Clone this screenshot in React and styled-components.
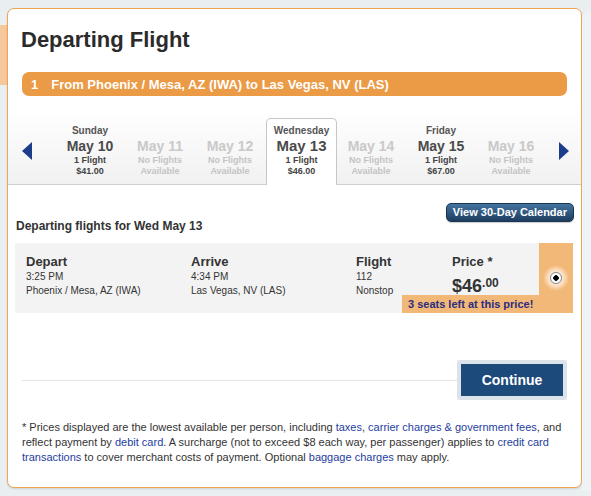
import React from "react";
import styled, { createGlobalStyle } from "styled-components";

const GlobalStyle = createGlobalStyle`
  html, body {
    margin: 0;
    padding: 0;
    background: #e9eef0;
  }
  body {
    font-family: "Liberation Sans", Arial, sans-serif;
  }
`;

const days = [
  { day: "Sunday", date: "May 10", flights: "1 Flight", price: "$41.00" },
  { date: "May 11" },
  { date: "May 12" },
  { day: "Wednesday", date: "May 13", flights: "1 Flight", price: "$46.00", selected: true },
  { date: "May 14" },
  { day: "Friday", date: "May 15", flights: "1 Flight", price: "$67.00" },
  { date: "May 16" },
];

const App = () => {
  return (
    <Page>
      <GlobalStyle />
      <LeftStub />
      <Card>
        <Title>Departing Flight</Title>
        <Banner>
          <BannerNum>1</BannerNum>
          From Phoenix / Mesa, AZ (IWA) to Las Vegas, NV (LAS)
        </Banner>

        <Strip>
          <Arrow $dir="left" />
          <DaysRow>
            {days.map((d) => {
              const open = !!d.flights;
              return (
                <DayCell key={d.date} $selected={d.selected}>
                  <DayName>{d.day}</DayName>
                  <DateText $open={open} $selected={d.selected}>
                    {d.date}
                  </DateText>
                  <Info $open={open}>{open ? d.flights : "No Flights"}</Info>
                  <Info $open={open}>{open ? d.price : "Available"}</Info>
                </DayCell>
              );
            })}
          </DaysRow>
          <Arrow $dir="right" />
        </Strip>

        <Section>
          <SectionHeader>
            <Heading>Departing flights for Wed May 13</Heading>
            <CalendarButton>View 30-Day Calendar</CalendarButton>
          </SectionHeader>

          <FlightRow>
            <Col $w="165px">
              <ColHead>Depart</ColHead>
              <Detail>3:25 PM</Detail>
              <Detail>Phoenix / Mesa, AZ (IWA)</Detail>
            </Col>
            <Col $w="165px">
              <ColHead>Arrive</ColHead>
              <Detail>4:34 PM</Detail>
              <Detail>Las Vegas, NV (LAS)</Detail>
            </Col>
            <Col $w="96px">
              <ColHead>Flight</ColHead>
              <Detail>112</Detail>
              <Detail>Nonstop</Detail>
            </Col>
            <Col $w="auto" $grow>
              <ColHead>Price *</ColHead>
              <BigPrice>
                $46<Cents>.00</Cents>
              </BigPrice>
            </Col>
            <RadioCell>
              <Glow>
                <Radio />
              </Glow>
            </RadioCell>
            <Seats>3 seats left at this price!</Seats>
          </FlightRow>
        </Section>

        <Actions>
          <Rule />
          <ContinueOuter>
            <ContinueButton>Continue</ContinueButton>
          </ContinueOuter>
        </Actions>

        <Footnote>
          * Prices displayed are the lowest available per person, including{" "}
          <Link>taxes</Link>, <Link>carrier charges &amp; government fees</Link>, and
          reflect payment by <Link>debit card</Link>. A surcharge (not to exceed $8
          each way, per passenger) applies to <Link>credit card transactions</Link> to
          cover merchant costs of payment. Optional <Link>baggage charges</Link> may
          apply.
        </Footnote>
      </Card>
      <RightPanel />
    </Page>
  );
};

export default App;

const Page = styled.div`
  display: flex;
  align-items: flex-start;
  height: 496px;
  padding-top: 8px;
  box-sizing: border-box;
  overflow: hidden;
`;

const LeftStub = styled.div`
  width: 7px;
  height: 60px;
  margin-top: 17px;
  background: #f6c89d;
`;

const RightPanel = styled.div`
  flex: 1;
  height: 480px;
  margin-top: 3px;
  background: #f0f3f5;
  border-top-left-radius: 8px;
`;

const Card = styled.div`
  width: 575px;
  height: 480px;
  box-sizing: border-box;
  border: 1px solid #f0a456;
  border-radius: 7px;
  background: #fff;
  padding-top: 18px;
  box-shadow: 0 1px 2px rgba(0, 0, 0, 0.12);
`;

const Title = styled.h1`
  margin: 0 13px;
  font-size: 22px;
  line-height: 26px;
  font-weight: bold;
  color: #2b2b2b;
`;

const Banner = styled.div`
  display: flex;
  align-items: center;
  height: 24px;
  margin: 19px 14px 0;
  padding-left: 9px;
  border-radius: 7px;
  background: #eb9a45;
  color: #fff;
  font-size: 13px;
  font-weight: bold;
`;

const BannerNum = styled.span`
  margin-right: 13px;
`;

const Strip = styled.div`
  display: flex;
  align-items: stretch;
  height: 77px;
  box-sizing: border-box;
  margin-top: 12px;
  padding: 10px 14px 0;
  border-bottom: 1px solid #cfcfcf;
  background: linear-gradient(#ffffff, #f1f1f1);
`;

const Arrow = styled.div`
  align-self: center;
  width: 0;
  height: 0;
  border-top: 9px solid transparent;
  border-bottom: 9px solid transparent;
  ${(p) =>
    p.$dir === "left"
      ? "border-right: 10px solid #1c3c8c;"
      : "border-left: 10px solid #1c3c8c;"}
`;

const DaysRow = styled.div`
  display: flex;
  margin: 0 13px 0 23px;
`;

const DayCell = styled.div`
  width: 70px;
  box-sizing: border-box;
  display: flex;
  flex-direction: column;
  align-items: center;
  padding-top: 7px;
  font-weight: bold;
  text-align: center;
  ${(p) =>
    p.$selected &&
    `
    width: 71px;
    margin: 0 -1px -1px 1px;
    padding-top: 6px;
    background: #fff;
    border: 1px solid #c6c6c6;
    border-bottom: none;
    border-radius: 5px 5px 0 0;
  `}
`;

const DayName = styled.div`
  min-height: 12px;
  font-size: 10px;
  line-height: 12px;
  color: #555;
`;

const DateText = styled.div`
  font-size: ${(p) => (p.$selected ? "15px" : "14px")};
  line-height: 18px;
  color: ${(p) => (p.$open ? "#4a4a4a" : "#c9c9c9")};
`;

const Info = styled.div`
  font-size: 9px;
  line-height: 11px;
  color: ${(p) => (p.$open ? "#444" : "#c4c4c4")};
`;

const Section = styled.div`
  padding: 0 8px 0 7px;
`;

const SectionHeader = styled.div`
  display: flex;
  justify-content: space-between;
  align-items: flex-start;
  margin-top: 18px;
`;

const Heading = styled.h2`
  margin: 16px 0 0 1px;
  font-size: 12px;
  line-height: 15px;
  font-weight: bold;
  color: #333;
`;

const CalendarButton = styled.button`
  height: 19px;
  margin-right: -1px;
  padding: 0 6px;
  border: 1px solid #1a3552;
  border-radius: 5px;
  background: linear-gradient(#4474a0, #1d3d60);
  color: #fff;
  font-family: "Liberation Sans", Arial, sans-serif;
  font-size: 11px;
  font-weight: bold;
  line-height: 17px;
  box-shadow: 0 1px 1px rgba(0, 0, 0, 0.2);
`;

const FlightRow = styled.div`
  position: relative;
  display: flex;
  height: 70px;
  margin-top: 9px;
  padding-left: 11px;
  background: #f3f3f3;
`;

const Col = styled.div`
  width: ${(p) => p.$w};
  flex: ${(p) => (p.$grow ? "1" : "none")};
  padding-top: 11px;
`;

const ColHead = styled.div`
  font-size: 13px;
  line-height: 16px;
  font-weight: bold;
  color: #333;
`;

const Detail = styled.div`
  font-size: 10px;
  line-height: 14px;
  color: #333;
`;

const BigPrice = styled.div`
  font-size: 18px;
  line-height: 26px;
  font-weight: bold;
  color: #333;
`;

const Cents = styled.span`
  font-size: 12px;
  vertical-align: 5px;
`;

const RadioCell = styled.div`
  width: 34px;
  display: flex;
  align-items: center;
  justify-content: center;
  background: #f1b878;
`;

const Glow = styled.div`
  width: 26px;
  height: 26px;
  border-radius: 50%;
  display: flex;
  align-items: center;
  justify-content: center;
  background: radial-gradient(circle, rgba(255, 240, 225, 0.9) 35%, rgba(255, 220, 185, 0.4) 60%, rgba(255, 220, 185, 0) 72%);
`;

const Radio = styled.div`
  width: 10px;
  height: 10px;
  border-radius: 50%;
  border: 1px solid #8a8a8a;
  background: radial-gradient(circle, #000 0 2.5px, #fff 3px);
  box-shadow: 0 0 1px rgba(0, 0, 0, 0.3);
`;

const Seats = styled.div`
  position: absolute;
  right: 34px;
  bottom: 0;
  width: 137px;
  height: 18px;
  box-sizing: border-box;
  padding-left: 6px;
  background: #f1b878;
  color: #2c2c80;
  font-size: 11px;
  line-height: 18px;
  font-weight: bold;
`;

const Actions = styled.div`
  display: flex;
  align-items: center;
  margin: 47px 14px 0;
`;

const Rule = styled.div`
  flex: 1;
  height: 1px;
  background: #e6e6e6;
`;

const ContinueOuter = styled.div`
  padding: 4px;
  border-radius: 3px;
  background: #dde3ea;
`;

const ContinueButton = styled.button`
  display: block;
  width: 102px;
  height: 32px;
  border: none;
  background: #1b4a7b;
  color: #fff;
  font-family: "Liberation Sans", Arial, sans-serif;
  font-size: 14px;
  font-weight: bold;
`;

const Footnote = styled.p`
  margin: 20px 14px 0;
  font-size: 11px;
  line-height: 15px;
  color: #333;
`;

const Link = styled.a`
  color: #1e3e9e;
  text-decoration: none;
`;
